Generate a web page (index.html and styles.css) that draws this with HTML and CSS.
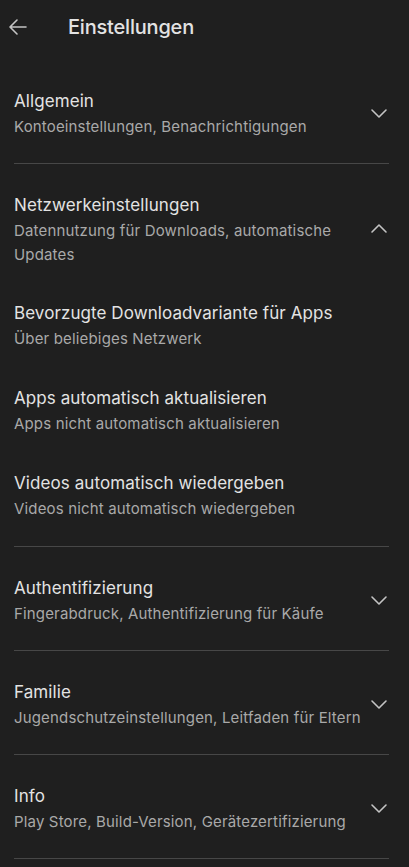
FILE: index.html
```html
<!DOCTYPE html>
<html lang="de">
<head>
    <meta charset="UTF-8">
    <meta name="viewport" content="width=device-width, initial-scale=1.0">
    <title>Einstellungen</title>
    <link rel="stylesheet" href="styles.css">
</head>
<body>
<header class="top-bar">
    <button class="back-btn" aria-label="Zurück">
        <svg width="24" height="24" viewBox="0 0 24 24"><path d="M20 12H4.5M11 5l-7 7 7 7" fill="none" stroke="currentColor" stroke-width="1.6" stroke-linecap="round" stroke-linejoin="round"/></svg>
    </button>
    <h1>Einstellungen</h1>
</header>

<section class="group">
    <div class="row">
        <div class="texts">
            <div class="title">Allgemein</div>
            <div class="sub">Kontoeinstellungen, Benachrichtigungen</div>
        </div>
        <svg class="chevron" width="24" height="24" viewBox="0 0 24 24"><path d="M5 9l7 7 7-7" fill="none" stroke="currentColor" stroke-width="1.6" stroke-linecap="round" stroke-linejoin="round"/></svg>
    </div>
</section>

<section class="group">
    <div class="row">
        <div class="texts">
            <div class="title">Netzwerkeinstellungen</div>
            <div class="sub">Datennutzung für Downloads, automatische Updates</div>
        </div>
        <svg class="chevron" width="24" height="24" viewBox="0 0 24 24"><path d="M5 15l7-7 7 7" fill="none" stroke="currentColor" stroke-width="1.6" stroke-linecap="round" stroke-linejoin="round"/></svg>
    </div>
    <div class="item">
        <div class="title">Bevorzugte Downloadvariante für Apps</div>
        <div class="sub">Über beliebiges Netzwerk</div>
    </div>
    <div class="item">
        <div class="title">Apps automatisch aktualisieren</div>
        <div class="sub">Apps nicht automatisch aktualisieren</div>
    </div>
    <div class="item">
        <div class="title">Videos automatisch wiedergeben</div>
        <div class="sub">Videos nicht automatisch wiedergeben</div>
    </div>
</section>

<section class="group">
    <div class="row">
        <div class="texts">
            <div class="title">Authentifizierung</div>
            <div class="sub">Fingerabdruck, Authentifizierung für Käufe</div>
        </div>
        <svg class="chevron" width="24" height="24" viewBox="0 0 24 24"><path d="M5 9l7 7 7-7" fill="none" stroke="currentColor" stroke-width="1.6" stroke-linecap="round" stroke-linejoin="round"/></svg>
    </div>
</section>

<section class="group">
    <div class="row">
        <div class="texts">
            <div class="title">Familie</div>
            <div class="sub">Jugendschutzeinstellungen, Leitfaden für Eltern</div>
        </div>
        <svg class="chevron" width="24" height="24" viewBox="0 0 24 24"><path d="M5 9l7 7 7-7" fill="none" stroke="currentColor" stroke-width="1.6" stroke-linecap="round" stroke-linejoin="round"/></svg>
    </div>
</section>

<section class="group">
    <div class="row">
        <div class="texts">
            <div class="title">Info</div>
            <div class="sub">Play Store, Build-Version, Gerätezertifizierung</div>
        </div>
        <svg class="chevron" width="24" height="24" viewBox="0 0 24 24"><path d="M5 9l7 7 7-7" fill="none" stroke="currentColor" stroke-width="1.6" stroke-linecap="round" stroke-linejoin="round"/></svg>
    </div>
</section>
</body>
</html>
```

FILE: styles.css
```css
body {
  font-family: Inter, Roboto, sans-serif;
  margin: 0;
  padding: 0;
  background-color: #1f1f1f;
  color: #e3e3e3;
}

/* Header */
.top-bar {
  display: flex;
  align-items: center;
  height: 60px;
  padding: 0 0 6px 6px;
  box-sizing: border-box;
}

.back-btn {
  background: none;
  border: none;
  padding: 0;
  width: 24px;
  height: 24px;
  color: #c4c4c4;
  cursor: pointer;
}

.back-btn svg {
  display: block;
}

.top-bar h1 {
  margin: 0 0 0 38px;
  font-size: 20px;
  font-weight: 500;
  line-height: 24px;
  letter-spacing: -0.2px;
  color: #e3e3e3;
}

/* Groups */
.group {
  margin-right: 20px;
  margin-left: 14px;
  border-bottom: 1px solid #474747;
}

.row {
  display: flex;
  align-items: center;
  padding: 29px 0 24px;
}

.texts {
  flex: 1;
  padding-right: 6px;
}

.title {
  font-size: 17px;
  line-height: 24px;
  letter-spacing: 0.08px;
  color: #e3e3e3;
}

.sub {
  margin-top: 2px;
  font-size: 15px;
  line-height: 24px;
  letter-spacing: 0.16px;
  color: #a9a9a9;
}

.chevron {
  flex-shrink: 0;
  color: #c4c4c4;
  margin: -2px -2px 0 0;
}

.item {
  padding: 10px 0 25px;
}
```
